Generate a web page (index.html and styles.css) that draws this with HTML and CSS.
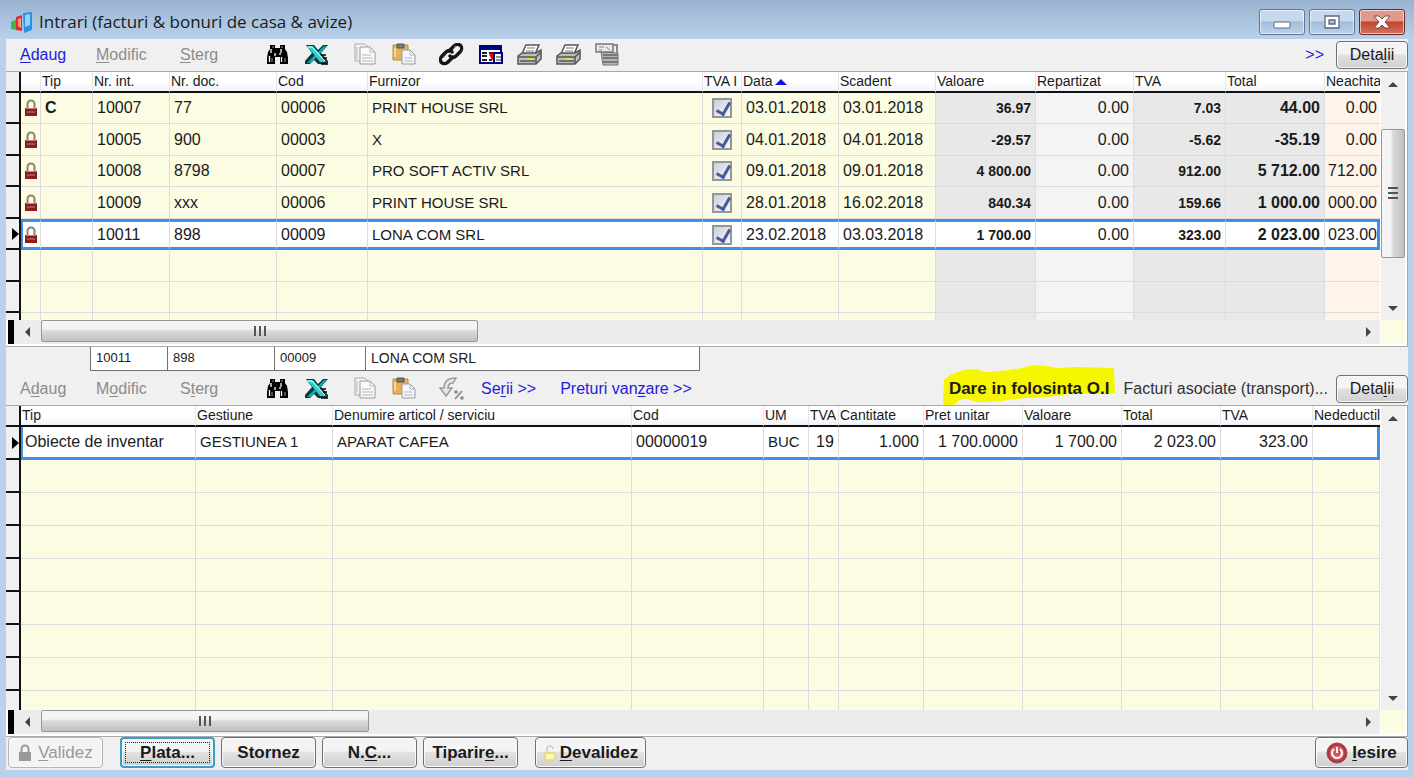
FILE: index.html
```html
<!DOCTYPE html>
<html lang="ro">
<head>
    <meta charset="UTF-8">
    <meta name="viewport" content="width=device-width, initial-scale=1.0">
    <title>Intrari (facturi &amp; bonuri de casa &amp; avize)</title>
    <link rel="stylesheet" href="styles.css">
</head>
<body>
    <svg class="sprite" aria-hidden="true">
        <symbol id="i-find" viewBox="0 0 25 24">
            <path d="M5 2h5v3h5V2h5v4l2 3 1 6v6h-8v-7h-5v7H2v-6l1-6 2-3z" fill="#000"/>
            <path d="M6 6v4M4.500 13v6M16 6v4M16.500 14v5M10 10v3M15 10v2" stroke="#fff" stroke-width="1.300"/>
            <path d="M7 4h2M16 4h2M20 15v4M7 15v4" stroke="#999"/>
        </symbol>
        <symbol id="i-excel" viewBox="0 0 25 24">
            <path d="M2 2h8l4 5 5-5h5l-7 8 7 8v2l-2 1h-8l-4-4-4 4H1v-3l7-8z" fill="#06383c"/>
            <path d="M20 3h3L7 20H3z" fill="#18a6aa"/>
            <path d="M3 3h6l13 16h-6z" fill="#27d3d3"/>
            <path d="M4 4h4l13 14" stroke="#fff" fill="none"/>
            <path d="M17 12h5M19 15h4M17 21h7" stroke="#000" stroke-width="1.500"/>
        </symbol>
        <symbol id="i-copy" viewBox="0 0 25 24">
            <path d="M3 1h10l3 3v14H3z" fill="#f4f4f4" stroke="#aaa"/>
            <path d="M8 4h10l5 5v12H8z" fill="#fafafa" stroke="#999"/>
            <path d="M18 4v5h5M10 12h9M10 15h11M10 18h11M5 4v12" fill="none" stroke="#b2b5ba"/>
        </symbol>
        <symbol id="i-paste" viewBox="0 0 25 24">
            <path d="M2 2h15v15H2z" fill="#e2b35c" stroke="#b98b42"/>
            <path d="M6 1h7v4H6z" fill="#777" stroke="#555"/>
            <path d="M4 5v9" stroke="#f7d793" stroke-width="2"/>
            <path d="M11 7h8l5 5v9H11z" fill="#f7f8fa" stroke="#999"/>
            <path d="M19 7v5h5M13 15h8M13 18h9" fill="none" stroke="#a8b5ca"/>
        </symbol>
        <symbol id="i-link" viewBox="0 0 25 24">
            <g fill="none" stroke="#161616" stroke-width="3.400" stroke-linecap="round">
                <path d="M10 8l5-5c2-2 5-2 6.500-.5S23 7 21 9l-4 4c-2 2-5 2-6 0"/>
                <path d="M14 14l-5 5c-2 2-5 2-6.500.5S1 15 3 13l4-4c2-2 5-2 6 0"/>
            </g>
            <path d="M15 4l2-1M4 15l3-3" stroke="#888"/>
        </symbol>
        <symbol id="i-form" viewBox="0 0 25 24">
            <path d="M2 3h21v17H2z" fill="#fff" stroke="#000080" stroke-width="2"/>
            <path d="M1 2h23v5H1z" fill="#000080"/>
            <path d="M4 10h5M4 13h5M4 17h5M11 10h4M11 17h3" stroke="#222" stroke-width="2"/>
            <path d="M11 12l5-3v3h3v3h-3v4z" fill="#e00000"/>
            <path d="M16 10h8v10h-8z" fill="#fff" stroke="#000080" stroke-width="2"/>
            <path d="M18 14h5M18 17h5" stroke="#222"/>
        </symbol>
        <symbol id="i-print" viewBox="0 0 25 24">
            <path d="M9 2h13l-4 9H5z" fill="#fff" stroke="#555" stroke-width="1.500"/>
            <path d="M10 5h8M9 8h8" stroke="#777"/>
            <path d="M1 13l4-3h14l5-3v9l-5 5H1z" fill="#bdbdbd" stroke="#555" stroke-width="1.500"/>
            <path d="M1 14h18v7M19 14l5-5M3 18h15" fill="none" stroke="#555" stroke-width="1.500"/>
            <path d="M10 16h6" stroke="#e2e236" stroke-width="2"/>
        </symbol>
        <symbol id="i-stack" viewBox="0 0 25 24">
            <path d="M6 9l17 1v12H8z" fill="#b5b5b5" stroke="#777"/>
            <path d="M8 15h15M8 19h15M8 12h15" stroke="#666" stroke-width="1.500"/>
            <path d="M1 1h17v8H1z" fill="#e9e9e9" stroke="#777" stroke-width="1.500"/>
            <path d="M4 4h5M4 7h3M11 4l4 3" stroke="#888"/>
            <path d="M18 2h4v8" fill="none" stroke="#888" stroke-width="2"/>
        </symbol>
        <symbol id="i-percent" viewBox="0 0 25 24">
            <path d="M17 1C9 1 5 4 5 11H1l6 8 6-8H9c0-4 2-5 5-5z" fill="#e6e6e6" stroke="#999" stroke-width="1.400"/>
            <path d="M23 14l-7 8" stroke="#888" stroke-width="1.600"/>
            <circle cx="17" cy="15" r="1.800" fill="#888"/>
            <circle cx="23" cy="21" r="1.800" fill="#888"/>
        </symbol>
        <symbol id="i-lock" viewBox="0 0 14 18">
            <path d="M3.500 9V5a3.500 3.500 0 0 1 7 0v4" fill="none" stroke="#8d8272" stroke-width="2"/>
            <path d="M1 9h12v8H1z" fill="#8e1c1c"/>
            <path d="M2 9.500h10M3 13h8" stroke="#c9807a"/>
        </symbol>
        <symbol id="i-lock-plain" viewBox="0 0 14 18">
            <path d="M3.500 8V5a3.500 3.500 0 0 1 7 0v3" fill="none" stroke="currentColor" stroke-width="2"/>
            <path d="M1 8h12v9H1z" fill="currentColor"/>
        </symbol>
        <symbol id="i-unlock" viewBox="0 0 14 18">
            <path d="M4 8V5a3 3 0 0 1 6 0" fill="none" stroke="#cfcfc4" stroke-width="1.500"/>
            <path d="M2 9h10v7H2z" fill="#fbf6b4" stroke="#e6d978" stroke-width="1.500"/>
        </symbol>
    </svg>

    <div class="window">
        <header class="titlebar">
            <svg class="app-icon" viewBox="0 0 24 24" aria-hidden="true">
                <path d="M1 12l6-3v11l-6-1z" fill="#3cb54a"/>
                <path d="M6 7l6-2v16l-6-1z" fill="#e22a2a"/>
                <path d="M8 9l3-1v10l-3-2z" fill="#ff9a90"/>
                <path d="M13 3l9-1v18l-8 3z" fill="#2c8fe0"/>
                <path d="M15 5l5-1v11l-5 2z" fill="#8fd2fa"/>
            </svg>
            <h1>Intrari (facturi &amp; bonuri de casa &amp; avize)</h1>
            <div class="win-buttons">
                <button type="button" aria-label="Minimizare"><svg viewBox="0 0 18 14"><rect x="1" y="7" width="16" height="6" rx="1" fill="#fff" stroke="#5a6a80"/></svg></button>
                <button type="button" aria-label="Maximizare"><svg viewBox="0 0 18 14"><path d="M2 1h14v12H2zM6 5v4h6V5z" fill="#fff" fill-rule="evenodd" stroke="#5a6a80" stroke-width="1.300"/></svg></button>
                <button type="button" class="close" aria-label="Inchidere"><svg viewBox="0 0 18 14"><path d="M1 1h5l3 3 3-3h5l-5 6 5 6h-5l-3-3-3 3H1l5-6z" fill="#fff" stroke="#7a4a4a"/></svg></button>
            </div>
        </header>

        <main class="client">
            <div class="toolbar">
                <div class="commands">
                    <a href="#" class="active"><u>A</u>daug</a>
                    <a href="#"><u>M</u>odific</a>
                    <a href="#"><u>S</u>terg</a>
                </div>
                <div class="icons">
                    <button type="button" aria-label="Cauta"><svg><use href="#i-find"/></svg></button>
                    <button type="button" aria-label="Excel"><svg><use href="#i-excel"/></svg></button>
                </div>
                <div class="icons">
                    <button type="button" aria-label="Copiaza"><svg><use href="#i-copy"/></svg></button>
                    <button type="button" aria-label="Lipeste"><svg><use href="#i-paste"/></svg></button>
                </div>
                <div class="icons">
                    <button type="button" aria-label="Legaturi"><svg><use href="#i-link"/></svg></button>
                    <button type="button" aria-label="Formular"><svg><use href="#i-form"/></svg></button>
                    <button type="button" aria-label="Tipareste"><svg><use href="#i-print"/></svg></button>
                    <button type="button" aria-label="Tipareste lista"><svg><use href="#i-print"/></svg></button>
                    <button type="button" aria-label="Documente"><svg><use href="#i-stack"/></svg></button>
                </div>
                <div class="right">
                    <a href="#" class="more">&gt;&gt;</a>
                    <button type="button" class="btn details">Deta<u>l</u>ii</button>
                </div>
            </div>

            <section class="grid grid-docs">
                <div class="table-wrap">
                    <table id="docs">
                        <colgroup>
                            <col class="w-mark"><col class="w-lock"><col class="w-tip"><col class="w-int"><col class="w-doc"><col class="w-cod"><col>
                            <col class="w-chk"><col class="w-date"><col class="w-date"><col class="w-val"><col class="w-rep"><col class="w-tva"><col class="w-tot"><col class="w-due">
                        </colgroup>
                        <thead>
                            <tr><th></th><th></th><th>Tip</th><th>Nr. int.</th><th>Nr. doc.</th><th>Cod</th><th>Furnizor</th><th>TVA I</th><th>Data <span class="sort"></span></th><th>Scadent</th><th>Valoare</th><th>Repartizat</th><th>TVA</th><th>Total</th><th>Neachita</th></tr>
                        </thead>
                        <tbody></tbody>
                    </table>
                </div>
                <div class="vscroll">
                    <button type="button" class="arrow up" aria-label="Sus"></button>
                    <div class="thumb"></div>
                    <button type="button" class="arrow down" aria-label="Jos"></button>
                </div>
                <div class="hscroll">
                    <button type="button" class="arrow left" aria-label="Stanga"></button>
                    <div class="thumb"></div>
                    <button type="button" class="arrow next" aria-label="Dreapta"></button>
                </div>
                <div class="corner"></div>
            </section>

            <div class="current">
                <input class="c-int" value="10011" aria-label="Nr. int." readonly>
                <input class="c-doc" value="898" aria-label="Nr. doc." readonly>
                <input class="c-cod" value="00009" aria-label="Cod" readonly>
                <input class="c-name" value="LONA COM SRL" aria-label="Furnizor" readonly>
            </div>

            <div class="toolbar">
                <div class="commands">
                    <a href="#">A<u>d</u>aug</a>
                    <a href="#">M<u>o</u>dific</a>
                    <a href="#">S<u>t</u>erg</a>
                </div>
                <div class="icons">
                    <button type="button" aria-label="Cauta"><svg><use href="#i-find"/></svg></button>
                    <button type="button" aria-label="Excel"><svg><use href="#i-excel"/></svg></button>
                </div>
                <div class="icons">
                    <button type="button" aria-label="Copiaza"><svg><use href="#i-copy"/></svg></button>
                    <button type="button" aria-label="Lipeste"><svg><use href="#i-paste"/></svg></button>
                </div>
                <div class="icons last">
                    <button type="button" aria-label="Discount"><svg><use href="#i-percent"/></svg></button>
                </div>
                <div class="links">
                    <a href="#">Se<u>r</u>ii &gt;&gt;</a>
                    <a href="#">Preturi van<u>z</u>are &gt;&gt;</a>
                </div>
                <div class="right">
                    <a href="#" class="marked">
                        <svg class="marker" viewBox="0 0 173 40" aria-hidden="true"><path d="M1 15C8 8 20 4 32 4c5 0 7 3 10 3 14-1 26-2 37-4C86 0 98-1 109 2c8 2 15 0 24 0l38 1 1 25c-14 2-30 0-46 1-12 2-28 4-43 4-16 1-30 5-50 4-6-2-12-5-16-2-4 2-4 5-8 5H0z" fill="#f6f600"/></svg>
                        Dare in folosinta O.I
                    </a>
                    <a href="#" class="plain">Facturi asociate (transport)...</a>
                    <button type="button" class="btn details">Deta<u>l</u>ii</button>
                </div>
            </div>

            <section class="grid grid-items">
                <div class="table-wrap">
                    <table id="items">
                        <colgroup>
                            <col class="w-mark"><col class="w-type"><col class="w-gest"><col><col class="w-code"><col class="w-um"><col class="w-pct">
                            <col class="w-qty"><col class="w-price"><col class="w-price"><col class="w-price"><col class="w-tva"><col class="w-ned">
                        </colgroup>
                        <thead>
                            <tr><th></th><th>Tip</th><th>Gestiune</th><th>Denumire articol / serviciu</th><th>Cod</th><th>UM</th><th>TVA</th><th>Cantitate</th><th>Pret unitar</th><th>Valoare</th><th>Total</th><th>TVA</th><th>Nedeductil</th></tr>
                        </thead>
                        <tbody></tbody>
                    </table>
                </div>
                <div class="vscroll">
                    <button type="button" class="arrow up" aria-label="Sus"></button>
                    <button type="button" class="arrow down" aria-label="Jos"></button>
                </div>
                <div class="hscroll">
                    <button type="button" class="arrow left" aria-label="Stanga"></button>
                    <div class="thumb"></div>
                    <button type="button" class="arrow next" aria-label="Dreapta"></button>
                </div>
                <div class="corner"></div>
            </section>

            <footer class="actions">
                <button type="button" class="btn" disabled><svg><use href="#i-lock-plain"/></svg><span><u>V</u>alidez</span></button>
                <button type="button" class="btn default"><span><u>P</u>lata...</span></button>
                <button type="button" class="btn"><span>Stornez</span></button>
                <button type="button" class="btn"><span>N.<u>C</u>...</span></button>
                <button type="button" class="btn"><span>Tiparir<u>e</u>...</span></button>
                <button type="button" class="btn wide"><svg><use href="#i-unlock"/></svg><span><u>D</u>evalidez</span></button>
                <button type="button" class="btn exit">
                    <svg class="power" viewBox="0 0 22 22" aria-hidden="true"><circle cx="11" cy="11" r="10" fill="#b8323c" stroke="#8f4a50"/><circle cx="11" cy="11" r="7.500" fill="#cf5a62"/><path d="M8 7a5 5 0 1 0 6 0M11 5v6" fill="none" stroke="#fff" stroke-width="2"/></svg>
                    <span><u>I</u>esire</span>
                </button>
            </footer>
        </main>
    </div>

    <script>
        const docs = [
            ['C', '10007', '77', '00006', 'PRINT HOUSE SRL', '03.01.2018', '03.01.2018', '36.97', '0.00', '7.03', '44.00', '0.00'],
            ['', '10005', '900', '00003', 'X', '04.01.2018', '04.01.2018', '-29.57', '0.00', '-5.62', '-35.19', '0.00'],
            ['', '10008', '8798', '00007', 'PRO SOFT ACTIV SRL', '09.01.2018', '09.01.2018', '4 800.00', '0.00', '912.00', '5 712.00', '712.00'],
            ['', '10009', 'xxx', '00006', 'PRINT HOUSE SRL', '28.01.2018', '16.02.2018', '840.34', '0.00', '159.66', '1 000.00', '000.00'],
            ['', '10011', '898', '00009', 'LONA COM SRL', '23.02.2018', '03.03.2018', '1 700.00', '0.00', '323.00', '2 023.00', '023.00']
        ];
        const items = [
            ['Obiecte de inventar', 'GESTIUNEA 1', 'APARAT CAFEA', '00000019', 'BUC', '19', '1.000', '1 700.0000', '1 700.00', '2 023.00', '323.00', '']
        ];
        const docClasses = ['type', '', '', '', 'name', '', '', 'sum', 'rep', 'sum', 'total', 'due'];
        const itemClasses = ['', 'name', 'name', '', 'name', 'pct', 'num', 'num', 'num', 'num', 'num', 'num'];

        function cells(values, classes) {
            return values.map((v, i) => `<td class="${classes[i]}">${v}</td>`);
        }

        function addRow(table, tds, selected) {
            const tr = document.createElement('tr');
            if (selected) tr.className = 'selected';
            tr.innerHTML = '<td class="mark"></td>' + tds.join('');
            table.tBodies[0].appendChild(tr);
        }

        const docsTable = document.getElementById('docs');
        const itemsTable = document.getElementById('items');

        // the last three rows of the documents grid are empty
        for (let r = 0; r < docs.length + 3; r++) {
            const row = docs[r];
            const tds = cells(row || Array(12).fill(''), docClasses);
            tds.unshift(`<td class="lock">${row ? '<svg><use href="#i-lock"/></svg>' : ''}</td>`);
            tds.splice(6, 0, `<td class="check">${row ? `<input type="checkbox" aria-label="TVA ${row[1]}" checked>` : ''}</td>`);
            addRow(docsTable, tds, r === docs.length - 1);
        }

        for (let r = 0; r < 9; r++) {
            addRow(itemsTable, cells(items[r] || Array(12).fill(''), itemClasses), r === 0);
        }
    </script>
</body>
</html>
```

FILE: styles.css
```css
* { box-sizing: border-box; }
body { margin: 0; font-family: "Liberation Sans", Arial, sans-serif; font-size: 16px; color: #1a1a1a; }
a { color: #1c1ce0; text-decoration: none; }
button { font-family: inherit; color: inherit; padding: 0; }
u { text-underline-offset: 2px; }
.sprite { display: none; }

.window { display: flex; flex-direction: column; height: 100vh; padding: 0 6px 7px; background: #b9d1ea; }
.titlebar { display: flex; align-items: center; flex: none; height: 39px; margin: 0 -6px; padding: 4px 9px 0 10px; background: linear-gradient(#99b4d1, #b9d1ea); }
.titlebar h1 { margin: 0 0 0 5px; font-family: "Open Sans", "Noto Sans", sans-serif; font-size: 17px; font-weight: 400; white-space: nowrap; }
.app-icon { width: 24px; height: 24px; }
.win-buttons { display: flex; gap: 4px; margin-left: auto; }
.win-buttons button { display: flex; align-items: center; justify-content: center; width: 46px; height: 26px; border: 1px solid #60758f; border-radius: 3px; background: linear-gradient(#c8d9ec 45%, #a4bddb 50%, #bcd2ea); box-shadow: inset 0 0 0 1px rgba(255, 255, 255, 0.6); }
.win-buttons svg { width: 18px; height: 14px; }
.win-buttons .close { border-color: #6b2b2b; background: linear-gradient(#e09a8c 45%, #c2452c 50%, #d4735c); }

.client { display: flex; flex-direction: column; flex: 1; min-height: 0; background: #f0f0f0; }

/* toolbars */
.toolbar { display: flex; align-items: center; flex: none; height: 32px; padding-left: 14px; white-space: nowrap; }
.commands { display: grid; grid-template-columns: 76px 84px 85px; }
.commands a { color: #8c8c8c; }
.commands .active { color: #1c1ce0; }
.icons { display: flex; gap: 14px; margin-right: 23px; }
.icons.last { margin-right: 17px; }
.icons button { width: 25px; height: 24px; border: 0; background: none; }
.icons svg { display: block; width: 25px; height: 24px; }
.links { display: flex; gap: 24px; }
.right { display: flex; align-items: center; gap: 8px; margin-left: auto; }
.right .more { margin-right: 4px; }
.right .plain { color: #333; }
.marked { position: relative; z-index: 0; margin-right: 6px; font-size: 17px; font-weight: bold; color: #1a1a1a; }
.marker { position: absolute; z-index: -1; left: -6px; top: -14px; width: 173px; height: 40px; }
.btn { border: 1px solid #707070; border-radius: 4px; background: linear-gradient(#f4f4f4 45%, #e2e2e2 50%, #cfcfcf); box-shadow: inset 0 0 0 1px #fafafa; }
.details { width: 72px; height: 28px; font-size: 16px; }

/* grids */
.grid { display: grid; grid-template-columns: 1fr 26px; grid-template-rows: 1fr 26px; column-gap: 1px; border-top: 1px solid #a9a9a9; border-right: 1px solid #a9a9a9; background: #fff; }
.grid-docs { flex: none; height: 275px; }
.grid-items { flex: 1; min-height: 0; }
.table-wrap { overflow: hidden; min-height: 0; }
table { width: 100%; table-layout: fixed; border-collapse: separate; border-spacing: 0; }
th { height: 21px; padding: 0 0 2px 1px; border-right: 1px solid #e4e6ea; border-bottom: 2px solid #111; background: linear-gradient(#fff 50%, #f1f3f6); font-size: 14px; font-weight: 400; line-height: 16px; text-align: left; white-space: nowrap; overflow: hidden; }
th:last-child { border-right: 0; }
th:first-child, .mark { border-right: 2px solid #111; background: #f0f0f0; }
td { height: 32px; padding: 0 4px; border-right: 1px solid #dcdcdc; border-bottom: 1px solid #dcdcdc; background: #fcfce2; line-height: 18px; white-space: nowrap; overflow: hidden; }
#docs tr:nth-child(odd) td { height: 31px; }
#items td { height: 33px; }
.name { font-size: 15px; }
.type { font-weight: bold; }
.pct { padding-left: 7px; }
.num, .sum, .rep, .total, .due { text-align: right; }
.sum { background: #e8e8e8; font-size: 14px; font-weight: bold; }
.total { background: #e8e8e8; font-weight: bold; }
.rep { background: #f4f4f4; }
.due { padding: 0 3px 0 0; border-right: 0; background: #fff4ea; }
td.mark { padding: 0; border-bottom: 2px solid #111; background: #f0f0f0; }
.lock { padding: 0 3px; }
.lock svg { display: block; width: 14px; height: 18px; }
.check { text-align: center; }
.check input { position: relative; display: block; width: 20px; height: 20px; margin: 0 auto; appearance: none; border: 2px solid #969696; background: linear-gradient(135deg, #c9cfdb, #f6f7fa); }
.check input:checked::after { content: ""; position: absolute; left: 5px; top: 0; width: 6px; height: 12px; border: solid #4858a0; border-width: 0 3px 3px 0; transform: rotate(30deg); }
.sort { display: inline-block; border: 6px solid transparent; border-top: 0; border-bottom-color: #1010e0; margin: 0 0 1px -1px; }

.selected td { border-bottom: 3px solid #3f90e4; background: #fff; }
.selected td:nth-child(2) { box-shadow: inset 2px 0 #3f90e4; }
.selected td:last-child { border-right: 3px solid #3f90e4; }
#docs .selected td { border-top: 3px solid #3f90e4; }
#docs .selected td:last-child { padding: 0; }
.selected .mark, #docs .selected .mark { border-top: 0; border-bottom: 2px solid #111; background: #f0f0f0; }
.selected .mark::after { content: ""; display: block; width: 0; margin-left: 6px; border: 6px solid transparent; border-left: 7px solid #000; border-right: 0; }

.w-mark { width: 15px; }
.w-lock { width: 20px; }
.w-tip { width: 52px; }
.w-int { width: 77px; }
.w-doc { width: 107px; }
.w-cod { width: 91px; }
.w-chk { width: 39px; }
.w-date { width: 97px; }
.w-val { width: 100px; }
.w-rep { width: 98px; }
.w-tva { width: 92px; }
.w-tot { width: 99px; }
.w-due { width: 55px; }
.w-type { width: 175px; }
.w-gest { width: 137px; }
.w-code { width: 132px; }
.w-um { width: 45px; }
.w-pct { width: 30px; }
.w-qty { width: 85px; }
.w-price { width: 99px; }
.w-ned { width: 67px; }

/* scroll bars */
.vscroll { display: flex; flex-direction: column; width: 24px; background: #f0f0f0; }
.hscroll { display: flex; height: 24px; border-left: 6px solid #000; margin-left: 2px; background: #ececec; }
.corner { width: 24px; height: 24px; background: #fcfce2; }
.arrow { display: flex; align-items: center; justify-content: center; flex: none; width: 24px; height: 24px; border: 0; background: none; }
.arrow::before { content: ""; border: 5px solid transparent; }
.up::before { border-top: 0; border-bottom-color: #444; }
.down { margin-top: auto; }
.down::before { border-bottom: 0; border-top-color: #444; }
.left { width: 27px; }
.left::before { border-left: 0; border-right-color: #444; }
.next { margin-left: auto; }
.next::before { border-right: 0; border-left-color: #444; }
.thumb { display: flex; align-items: center; justify-content: center; border: 1px solid #979797; border-radius: 2px; }
.thumb::before { content: ""; width: 12px; height: 10px; background: repeating-linear-gradient(90deg, #555 0 2px, transparent 2px 5px); }
.hscroll .thumb { height: 22px; background: linear-gradient(#f4f4f4 40%, #dadada 50%, #c0c0c4); }
.grid-docs .hscroll .thumb { width: 32%; }
.grid-items .hscroll .thumb { width: 24%; }
.vscroll .thumb { height: 52%; margin-top: 33px; background: linear-gradient(90deg, #f4f4f4 40%, #dadada 50%, #c0c0c4); }
.vscroll .thumb::before { width: 10px; height: 12px; background: repeating-linear-gradient(#555 0 2px, transparent 2px 5px); }

/* current document */
.current { display: flex; flex: none; height: 27px; padding-left: 84px; border-top: 1px solid #a9a9a9; }
.current input { height: 24px; padding: 0 5px 2px; border: 1px solid #707070; border-right: 0; border-top: 0; border-radius: 0; background: #fff; font-family: inherit; font-size: 13px; color: inherit; }
.current .c-int { width: 77px; }
.current .c-doc { width: 107px; }
.current .c-cod { width: 91px; }
.current .c-name { width: 335px; border-right: 1px solid #707070; font-size: 14px; }

/* bottom buttons */
.actions { display: flex; flex: none; gap: 6px; height: 34px; padding: 0 0 2px 2px; border-top: 1px solid #a9a9a9; }
.actions .btn { display: flex; align-items: center; justify-content: center; gap: 6px; width: 95px; font-size: 17px; font-weight: bold; }
.actions .btn svg { flex: none; width: 14px; height: 18px; }
.actions .btn:disabled { margin-right: 11px; border-color: #b5b5b5; background: #f4f4f4; color: #999; font-weight: 400; }
.actions .default { border: 2px solid #3c9cc8; outline: 1px dotted #222; outline-offset: -6px; }
.actions .wide { gap: 3px; width: 111px; margin-left: 11px; }
.actions .exit { gap: 4px; width: 93px; margin-left: auto; }
.actions .btn .power { width: 22px; height: 22px; }
```
